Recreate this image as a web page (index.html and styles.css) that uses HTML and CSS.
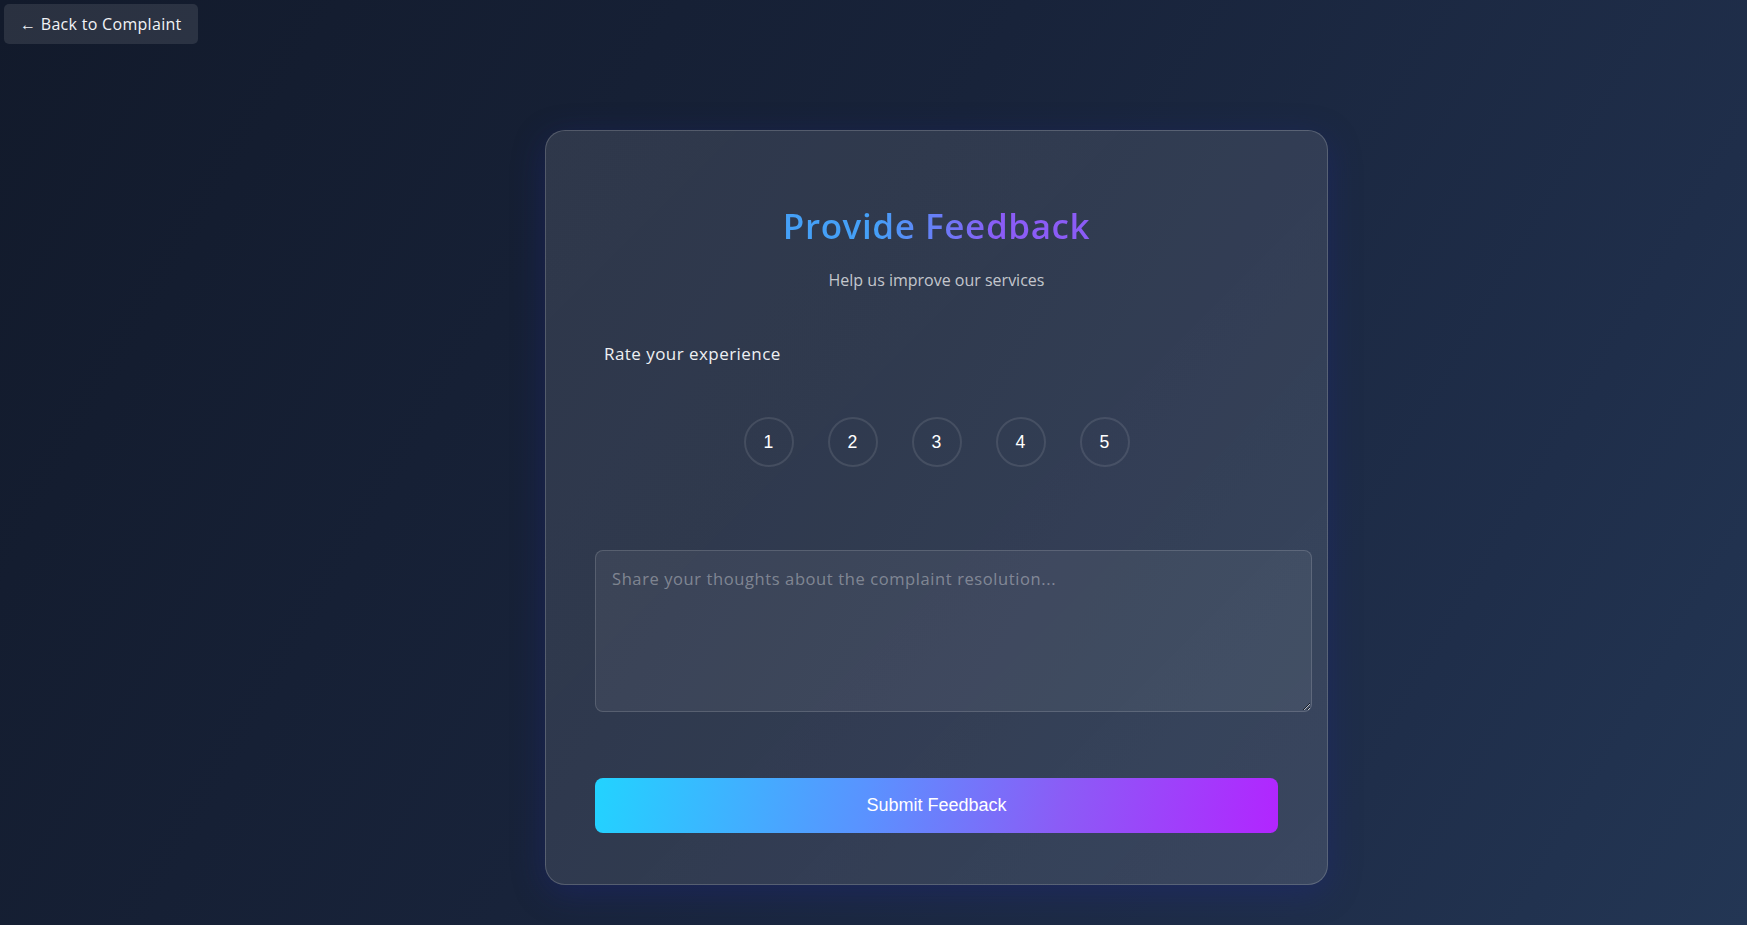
FILE: index.html
```html
<!DOCTYPE html>
<html lang="en">
<head>
<meta charset="utf-8">
<title>Provide Feedback</title>
<link rel="stylesheet" href="styles.css">
</head>
<body>
  <a class="back-btn" href="#">← Back to Complaint</a>
  <main class="wrap">
    <section class="card">
      <h1 class="title">Provide Feedback</h1>
      <p class="subtitle">Help us improve our services</p>
      <div class="rate-label">Rate your experience</div>
      <div class="rating">
        <button class="star">1</button>
        <button class="star">2</button>
        <button class="star">3</button>
        <button class="star">4</button>
        <button class="star">5</button>
      </div>
      <textarea class="comment" placeholder="Share your thoughts about the complaint resolution..."></textarea>
      <button class="submit">Submit Feedback</button>
    </section>
  </main>
</body>
</html>
```
FILE: styles.css
```css
* { box-sizing: content-box; }
html, body { height: 100%; }
body {
  margin: 0;
  padding: 4px;
  box-sizing: border-box;
  min-height: 100vh;
  font-family: "Open Sans", "Noto Sans", sans-serif;
  color: #fff;
  background: linear-gradient(120deg, #121a2b 0%, #18233a 45%, #1f2e4a 80%, #233654 100%);
}
.back-btn {
  display: inline-flex;
  align-items: center;
  height: 40px;
  padding: 0 16px;
  border-radius: 5px;
  background: rgba(255,255,255,0.1);
  color: #f1f3f6;
  font-size: 16px;
  letter-spacing: 0.3px;
  text-decoration: none;
  box-sizing: border-box;
}
.wrap {
  display: flex;
  justify-content: center;
  padding-left: 126px;
  margin-top: 86px;
}
.card {
  width: 683px;
  padding: 49px 49px 51px;
  border: 1px solid rgba(255,255,255,0.18);
  border-radius: 20px;
  background: linear-gradient(135deg, rgba(255,255,255,0.11) 0%, rgba(255,255,255,0.1) 50%, rgba(255,255,255,0.12) 100%);
  box-shadow: 0 8px 32px rgba(31,38,135,0.37);
  display: flex;
  flex-direction: column;
}
.title {
  margin: 25px 0 0;
  text-align: center;
  font-size: 35px;
  line-height: 42px;
  font-weight: 600;
  letter-spacing: 0.6px;
  background: linear-gradient(90deg, #45a0f7 30%, #8b5cf6 70%);
  -webkit-background-clip: text;
  background-clip: text;
  color: transparent;
  align-self: center;
}
.subtitle {
  margin: 21px 0 0;
  text-align: center;
  font-size: 16px;
  line-height: 24px;
  color: rgba(255,255,255,0.72);
}
.rate-label {
  margin: 50px 0 0 9px;
  font-size: 17px;
  line-height: 24px;
  letter-spacing: 0.45px;
  color: #eef0f3;
}
.rating {
  margin-top: 51px;
  display: flex;
  justify-content: center;
  gap: 34px;
}
.star {
  width: 50px;
  height: 50px;
  padding: 0;
  box-sizing: border-box;
  border-radius: 50%;
  border: 2px solid rgba(255,255,255,0.1);
  background: transparent;
  color: #fff;
  font-family: "Liberation Sans", Arial, sans-serif;
  font-size: 17.6px;
}
.comment {
  margin-top: 83px;
  width: 100%;
  height: 128px;
  padding: 16px;
  border: 1px solid rgba(255,255,255,0.15);
  border-radius: 8px;
  background: rgba(255,255,255,0.06);
  color: #fff;
  font-family: "Open Sans", "Noto Sans", sans-serif;
  font-size: 16.5px;
  letter-spacing: 0.6px;
  line-height: 1.5;
  display: block;
}
.comment::placeholder { color: rgba(255,255,255,0.36); }
.submit {
  margin-top: 66px;
  height: 55px;
  width: 100%;
  box-sizing: border-box;
  border: none;
  border-radius: 8px;
  background: linear-gradient(100deg, #22d3ff 0%, #5a92ff 40%, #8b5cf6 68%, #b225ff 100%);
  color: #fff;
  font-family: "Liberation Sans", Arial, sans-serif;
  font-size: 18px;
}
```
